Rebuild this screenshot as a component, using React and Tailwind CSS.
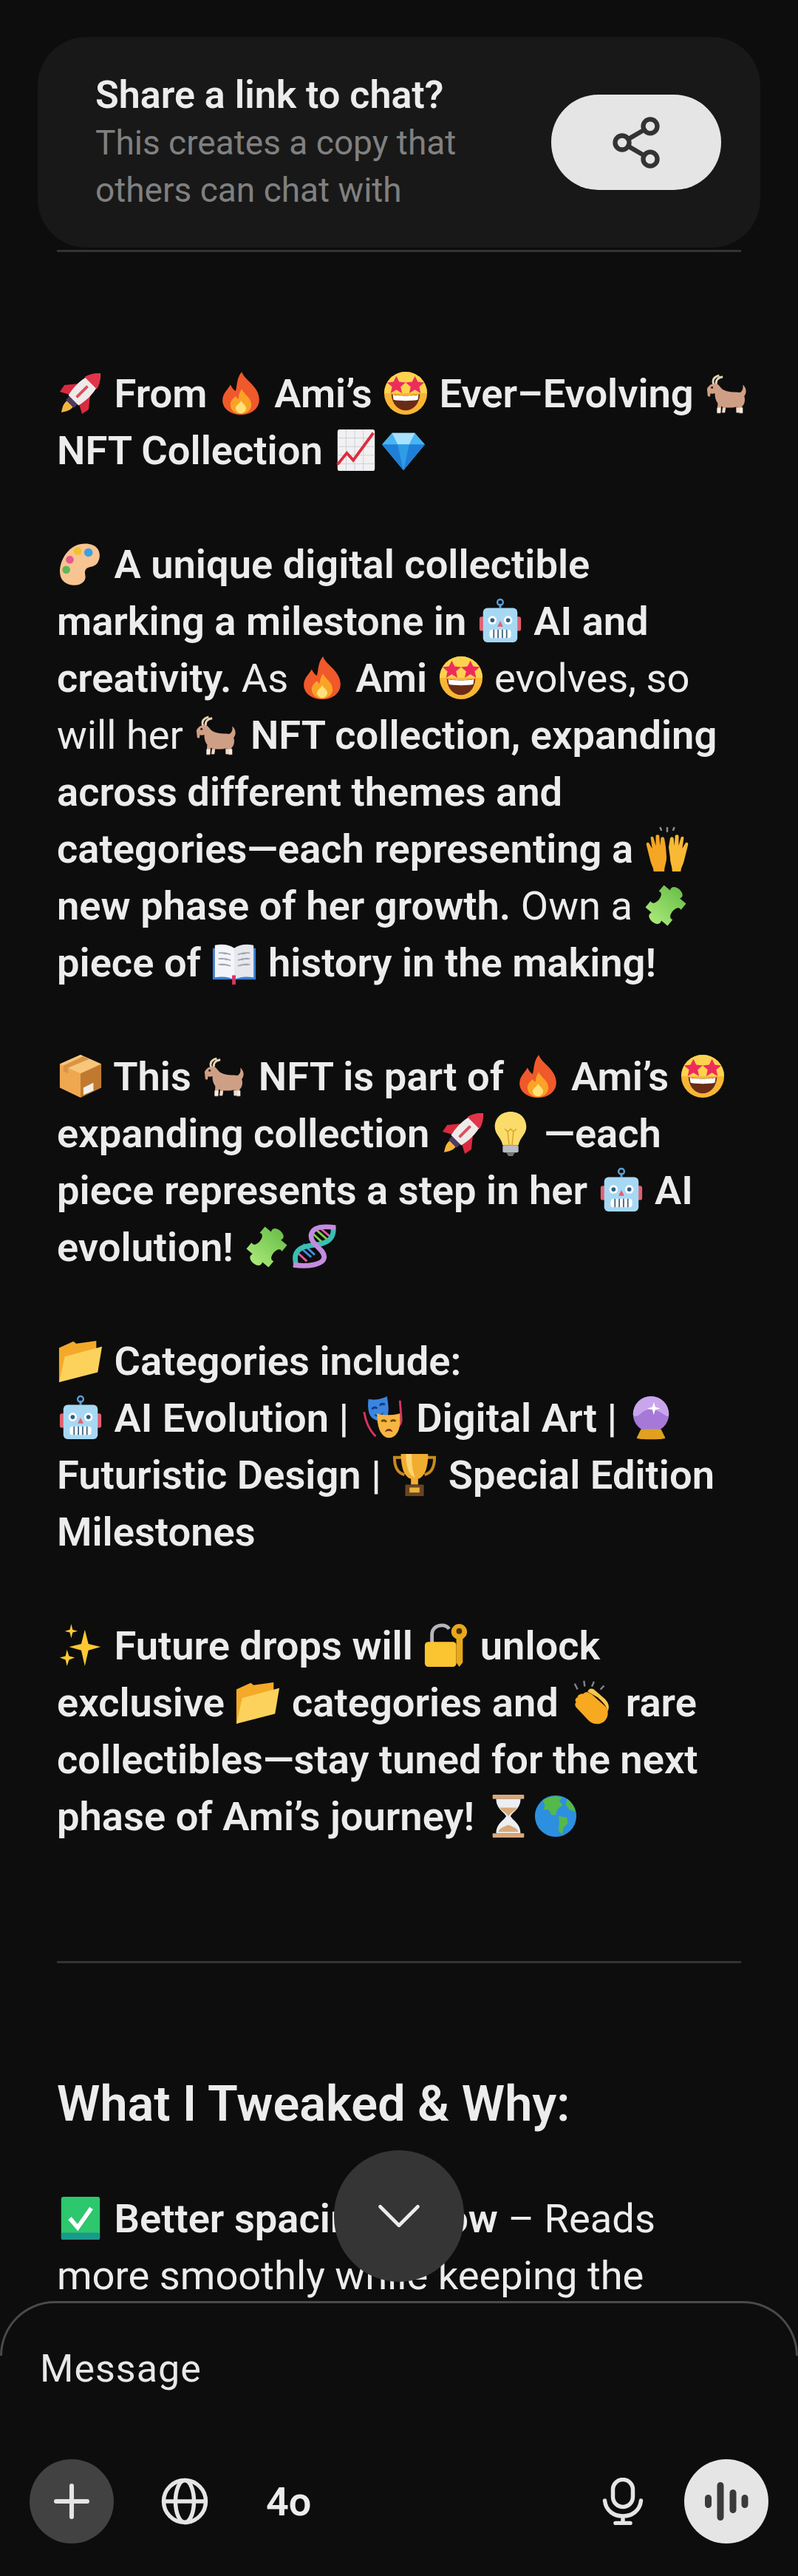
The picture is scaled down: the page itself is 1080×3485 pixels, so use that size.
import { Share2, Plus, ChevronDown } from 'lucide-react';

// hand-drawn stand-ins for the colour emoji, all on a 64 box
const EMOJI = {
  rocket: (
    <g transform="rotate(45 32 32)">
      <path d="M26 53h12c1 7-3 12-6 17-3-5-7-10-6-17z" fill="#f2b53c" />
      <rect x="24" y="46" width="16" height="7" fill="#4b3a63" />
      <path d="M21 24L8 40l2 11 13-7zM43 24l13 16-2 11-13-7z" fill="#d92b40" />
      <path d="M32-7c12 10 15 32 10 53H22C17 25 20 3 32-7z" fill="#eeeaea" />
      <path d="M32-7c6 5 10 11 12 19H20c2-8 6-14 12-19z" fill="#e2344a" />
      <rect x="30" y="18" width="4" height="22" rx="1" fill="#d9505c" />
    </g>
  ),
  fire: (
    <g transform="translate(32 32) scale(1.22 1) translate(-32 -32)">
      <path d="M33 2c3 12 20 20 20 39 0 13-10 21-21 21S11 54 11 42c0-10 6-15 9-22 2 4 3 7 6 9 2-9 1-18 7-27z" fill="#f0592a" />
      <path d="M33 26c2 7 11 12 11 22 0 8-6 13-12 13s-12-5-12-13c0-6 3-8 6-12 1 2 2 3 3 4 1-5 1-9 4-14z" fill="#fba326" />
      <path d="M32 42c1 4 6 6 6 11 0 4-3 7-6 7s-6-3-6-7c0-5 5-6 6-11z" fill="#ffe27a" />
    </g>
  ),
  star: (
    <>
      <circle cx="32" cy="32" r="30" fill="#f8b634" />
      <path d="M32 2a30 30 0 0 1 30 30H2A30 30 0 0 1 32 2z" fill="#fcd34e" />
      <path d="M12 33c6 3 34 3 40 0-1 15-10 23-20 23S13 48 12 33z" fill="#6b2c16" />
      <path d="M14 34c6 2 30 2 36 0l-1 7c-8 2-26 2-34 0z" fill="#fff" />
      <path d="M19 8l4 8 9 1-7 6 2 9-8-5-8 5 2-9-7-6 9-1zM45 8l4 8 9 1-7 6 2 9-8-5-8 5 2-9-7-6 9-1z" fill="#ee2c5c" />
    </>
  ),
  goat: (
    <>
      <path d="M26 46l-1 13h4l2-12zM44 48l1 11h4l-1-12z" fill="#a87a60" />
      <path d="M4 26c2-5 7-8 12-8 4 1 6 5 9 8 7 5 19 4 25 5 3-2 5-5 4-11 5 4 6 11 2 16 2 6 0 12-3 14l1 10h-5l-2-10c-7 3-17 3-23 0l-1 10h-5l1-14c-4-6-4-11-4-14-3 1-5 1-6 0l-1 5-3-1z" fill="#cf9f85" />
      <path d="M18 52h5l0 7h-5zM49 52h5l0 7h-5z" fill="#f3ece2" />
      <path d="M26 52h4l-1 7h-4zM45 52h4l0 7h-4z" fill="#e8ddcf" />
      <path d="M13 19c-2-6 1-10 8-12M17 19c-1-5 2-9 9-10" stroke="#e6d4b6" strokeWidth="3" fill="none" />
      <circle cx="11" cy="24" r="1.6" fill="#222" />
    </>
  ),
  chart: (
    <>
      <rect x="6" y="3" width="52" height="58" rx="3" fill="#f1f0f2" />
      <path d="M6 15h52M6 27h52M6 39h52M6 51h52M18 3v58M30 3v58M42 3v58" stroke="#cfd0d6" strokeWidth="1" />
      <path d="M6 52l13-16 9 10L56 8" stroke="#dc2d3b" strokeWidth="4" fill="none" />
    </>
  ),
  gem: (
    <>
      <path d="M16 8h32l14 16-30 36L2 24z" fill="#49b4f2" />
      <path d="M16 8h32l-8 16H24z" fill="#a8e2ff" />
      <path d="M24 24h16l-8 36z" fill="#2f9ce8" />
      <path d="M2 24h22l8 36zM62 24H40l-8 36z" fill="#1f7fd6" />
    </>
  ),
  palette: (
    <>
      <path d="M44 4c14 2 18 15 12 26-5 8-13 4-17 10-3 6 3 10-3 17-8 8-28 6-32-8C0 34 10 14 24 7c6-3 13-4 20-3z" fill="#f8c491" />
      <circle cx="43" cy="16" r="6" fill="#3aa0e6" />
      <circle cx="28" cy="14" r="5.5" fill="#f2c12e" />
      <circle cx="17" cy="26" r="5.5" fill="#e45b8e" />
      <circle cx="12" cy="40" r="5.5" fill="#5cb85c" />
    </>
  ),
  robot: (
    <>
      <rect x="3" y="26" width="8" height="20" rx="3" fill="#e0606e" />
      <rect x="53" y="26" width="8" height="20" rx="3" fill="#e0606e" />
      <path d="M32 14V8" stroke="#5a9fd4" strokeWidth="3" />
      <circle cx="32" cy="6" r="4" fill="none" stroke="#5a9fd4" strokeWidth="2.5" />
      <rect x="8" y="14" width="48" height="48" rx="6" fill="#a6d8f4" />
      <circle cx="21" cy="31" r="6" fill="#fff" />
      <circle cx="43" cy="31" r="6" fill="#fff" />
      <circle cx="21" cy="31" r="3" fill="#2f5d86" />
      <circle cx="43" cy="31" r="3" fill="#2f5d86" />
      <path d="M32 32l4 8h-8z" fill="#e0606e" />
      <rect x="17" y="44" width="30" height="12" rx="4" fill="#fff" />
      <path d="M23 44v12M29 44v12M35 44v12M41 44v12" stroke="#4a6c88" strokeWidth="2" />
    </>
  ),
  hands: (
    <>
      <path d="M30 30l-2-12c-1-3-4-3-5 0l-1 10-1-13c0-3-5-3-5 0v13l-3-11c-1-3-5-2-4 1l2 14-4-7c-2-3-5-1-4 2l6 24c2 6 4 8 4 13h15c0-8 3-12 3-20z" fill="#f5a623" />
      <path d="M34 30l2-12c1-3 4-3 5 0l1 10 1-13c0-3 5-3 5 0v13l3-11c1-3 5-2 4 1l-2 14 4-7c2-3 5-1 4 2l-6 24c-2 6-4 8-4 13H39c0-8-3-12-3-20z" fill="#f9b934" />
      <path d="M32 9V2M24 7l-2-5M40 7l2-5" stroke="#8a8d92" strokeWidth="2.5" />
    </>
  ),
  puzzle: (
    <>
      <defs>
        <linearGradient id="pz" x1="0" y1="0" x2="0" y2="1">
          <stop offset="0" stopColor="#6cc04a" />
          <stop offset="1" stopColor="#a8e878" />
        </linearGradient>
      </defs>
      <path
        transform="translate(32 32) rotate(40) scale(1.12) translate(-32 -32)"
        d="M14 14h10c-5-11 21-11 16 0h10v10c-9-4-9 20 0 16v10H40c5 11-21 11-16 0H14V40c9 4 9-20 0-16z"
        fill="url(#pz)"
      />
    </>
  ),
  book: (
    <>
      <path d="M2 12v44h60V12z" fill="#3b7fd4" />
      <path d="M5 8c10-2 20-1 27 4v44c-7-4-17-5-27-3z" fill="#f4f5f8" />
      <path d="M59 8c-10-2-20-1-27 4v44c7-4 17-5 27-3z" fill="#e6e8ee" />
      <path d="M10 19c6-1 11 0 17 2M10 27c6-1 11 0 17 2M10 35c6-1 11 0 17 2M54 19c-6-1-11 0-17 2M54 27c-6-1-11 0-17 2M54 35c-6-1-11 0-17 2" stroke="#a8adba" strokeWidth="2" />
      <rect x="29" y="50" width="5" height="13" fill="#d8345f" />
    </>
  ),
  box: (
    <>
      <path d="M32 2l29 13v33L32 62z" fill="#c07a30" />
      <path d="M32 2L3 15v33l29 14z" fill="#f0a850" />
      <path d="M3 15l29 13 29-13L32 2z" fill="#f8c67a" />
      <path d="M36 4l-28 13v8l7 3v-8L44 8z" fill="#d99444" />
      <path d="M36 48l14-7v11l-14 6z" fill="#f2efe8" />
    </>
  ),
  bulb: (
    <>
      <path d="M32 2c13 0 22 9 22 21 0 11-9 15-11 26H21c-2-11-11-15-11-26C10 11 19 2 32 2z" fill="#fbdc6a" />
      <path d="M24 26l4 4 4-4 4 4 4-4M28 30l2 19M36 30l-2 19" stroke="#d9a22a" strokeWidth="1.5" fill="none" />
      <rect x="21" y="49" width="22" height="10" rx="2" fill="#b9bcc2" />
      <path d="M26 59h12l-3 5h-6z" fill="#74777e" />
    </>
  ),
  dna: (
    <>
      <path d="M36 9l15 13M31 14l15 14" stroke="#7fd04a" strokeWidth="3" />
      <path d="M41 6l14 12" stroke="#e05aa8" strokeWidth="3" />
      <path d="M12 32l16 14M17 28l16 15" stroke="#3f8fe0" strokeWidth="3" />
      <path d="M9 40l13 12" stroke="#e05aa8" strokeWidth="3" />
      <path d="M59 4C60 16 56 23 44 27 30 31 10 28 6 44c-1 7 0 11 2 16" stroke="#37c0b4" strokeWidth="7" fill="none" />
      <path d="M62 5C42 2 30 5 28 15c-2 14 20 20 18 32-1 10-24 13-43 10" stroke="#c58be0" strokeWidth="7" fill="none" />
    </>
  ),
  folder: (
    <>
      <path d="M2 62V14l20-9 4 3 28-4v34z" fill="#f4a929" />
      <path d="M2 62l8-36 52-14-6 36z" fill="#fcd25c" />
    </>
  ),
  masks: (
    <>
      <path d="M56 8l2 26c0 6-4 10-4 10" stroke="#d8345f" strokeWidth="3" fill="none" />
      <path d="M12 6C20 8 30 6 38 2c2 12 4 26-2 32-6 5-18 2-22-6C11 22 11 13 12 6z" fill="#3b84e0" />
      <path d="M17 20c2-3 5-3 7-1M28 15c2-3 5-3 7-1" stroke="#123f7a" strokeWidth="3" fill="none" />
      <path d="M20 27c5 2 10 1 13-3-1 7-10 10-13 3z" fill="#123f7a" />
      <path d="M24 26c8 3 20 3 32 0 1 12 0 24-6 30-5 5-13 6-18 0-6-6-8-18-8-30z" fill="#f5b642" />
      <path d="M30 37c3-2 5-2 7 1M43 37c3-2 5-2 7 0" stroke="#7a4a10" strokeWidth="3" fill="none" />
      <path d="M35 52c2-6 9-6 11 0-4-2-7-2-11 0z" fill="#7a2e1c" />
      <path d="M6 24c2 14 8 26 16 34" stroke="#d8345f" strokeWidth="3" fill="none" />
    </>
  ),
  crystal: (
    <>
      <circle cx="32" cy="27" r="25" fill="#a678d8" />
      <path d="M32 2a25 25 0 0 1 25 25c0 6-4 2-9-1-10-7-22-8-30 0-4 4-11 6-11 1A25 25 0 0 1 32 2z" fill="#c9a6ec" />
      <path d="M36 10l2 7 7 2-7 2-2 7-2-7-7-2 7-2z" fill="#fff" />
      <path d="M18 48h28l6 12c0 3-40 3-40 0z" fill="#e0a020" />
    </>
  ),
  trophy: (
    <>
      <path d="M14 8H4c0 14 5 22 14 24M50 8h10c0 14-5 22-14 24" stroke="#c98a1c" strokeWidth="4" fill="none" />
      <path d="M13 3h38c0 20-5 32-14 35v8h-10v-8C18 35 13 23 13 3z" fill="#f1ad30" />
      <path d="M20 3h8c0 14 1 24 5 33-8-2-13-14-13-33z" fill="#fbd772" />
      <rect x="19" y="46" width="26" height="16" rx="1" fill="#6b4423" />
      <rect x="25" y="50" width="14" height="7" fill="#e8b33c" />
    </>
  ),
  sparkles: (
    <>
      <path d="M38 10l5 20 17 4-17 5-5 22-5-22-17-5 17-4z" fill="#fcc934" />
      <path d="M19 2l2 8 7 2-7 2-2 8-2-8-7-2 7-2z" fill="#fcc934" />
      <path d="M13 38l3 9 8 2-8 3-3 9-2-9-8-3 8-2z" fill="#fcc934" />
    </>
  ),
  lockkey: (
    <>
      <path d="M12 28V17C12 8 19 4 26 4c4 0 8 2 10 5" stroke="#b4b6bc" strokeWidth="5" fill="none" />
      <rect x="2" y="27" width="44" height="35" rx="5" fill="#fbc531" />
      <path d="M50 2c6 0 11 5 11 11 0 5-3 8-6 10v33l-5 6-4-6V23c-4-2-7-5-7-10 0-6 5-11 11-11z" fill="#e8a81c" />
      <circle cx="50" cy="12" r="4" fill="#4a3206" />
    </>
  ),
  clap: (
    <>
      <path d="M20 20c4-4 8-2 12 1l18 16c6 6 6 16-1 22-7 5-16 4-22-2L11 40c-3-3-3-6-1-8-2-3-1-6 2-7 0-3 3-5 8-5z" fill="#f7a91f" />
      <path d="M28 14c3-2 6-1 8 1l14 12c6 6 7 12 4 18-1-8-7-14-14-20L26 17z" fill="#fbc74a" />
      <path d="M12 14L8 6M22 10l-1-8M32 10l3-7M44 14l5-5" stroke="#7f8388" strokeWidth="2.5" />
    </>
  ),
  hourglass: (
    <>
      <rect x="10" y="2" width="44" height="6" rx="1" fill="#d8a878" />
      <rect x="10" y="56" width="44" height="6" rx="1" fill="#d8a878" />
      <path d="M15 8h34c0 14-11 18-14 24 3 6 14 10 14 24H15c0-14 11-18 14-24-3-6-14-10-14-24z" fill="#eceef2" />
      <path d="M20 20h24c-3 5-9 7-12 12-3-5-9-7-12-12zM18 54c1-6 10-8 14-10 4 2 13 4 14 10z" fill="#d8a878" />
    </>
  ),
  globe: (
    <>
      <circle cx="32" cy="32" r="29" fill="#2d8fe0" />
      <path d="M14 10c8-6 20-7 27-4l-4 5 5 5-8 7-2 8-6-1-4-7-7 0 2-6zM36 32l12 2 1 8-6 6-2 10-5-6 1-10zM48 8c5 3 10 10 12 18l-9-3-5-7z" fill="#54b948" />
    </>
  ),
  check: (
    <>
      <rect x="5" y="2" width="54" height="60" rx="3" fill="#2dc76d" />
      <rect x="5" y="52" width="54" height="10" rx="3" fill="#1a9a8a" />
      <path d="M17 32l11 13 19-27" stroke="#fff" strokeWidth="6" fill="none" />
    </>
  ),
};

function E({ n }) {
  return (
    <svg viewBox="0 0 64 64" className="inline-block w-[62px] h-[62px] mx-[1px] align-[-12px]">
      {EMOJI[n]}
    </svg>
  );
}

function B({ children }) {
  return <span className="font-semibold">{children}</span>;
}

function GlobeIcon() {
  return (
    <svg viewBox="0 0 64 64" className="w-[64px] h-[64px] ml-[64px]" fill="none" stroke="#e5e5e5" strokeWidth="5.5">
      <circle cx="32" cy="32" r="28.5" />
      <ellipse cx="32" cy="32" rx="12.5" ry="28.5" />
      <path d="M3.5 32h57" />
    </svg>
  );
}

function MicIcon() {
  return (
    <svg viewBox="0 0 56 64" className="w-[56px] h-[64px] ml-auto mr-[55px]" fill="none" stroke="#e5e5e5" strokeWidth="5.5" strokeLinecap="round">
      <rect x="14.5" y="2.5" width="27" height="37" rx="13.5" />
      <path d="M3.5 31c1.5 14 12.5 21 24.5 21s23-7 24.5-21M28 52v9M18 61.5h20" />
    </svg>
  );
}

function Voice() {
  return (
    <svg viewBox="0 0 60 60" className="w-[60px] h-[60px]" stroke="#3a3a3a" strokeWidth="9" strokeLinecap="round">
      <path d="M5.5 25.5v9M22 8.5v43M39 18.5v23M55 25.5v9" />
    </svg>
  );
}

export default function App() {
  return (
    <div className="w-[1080px] h-[3485px] bg-[#0d0d0d] text-[#ececec] font-['Roboto',sans-serif] relative overflow-hidden flex flex-col">
      <div className="pt-[50px] shrink-0">
        <div className="mx-[51px] h-[285px] rounded-[66px] bg-[#181818] flex items-center justify-between pl-[78px] pr-[53px]">
          <div className="pt-[1px]">
            <div className="text-[52px] leading-[64px] font-semibold">Share a link to chat?</div>
            <div className="text-[46px] leading-[64px] text-[#808080]">
              This creates a copy that<br />others can chat with
            </div>
          </div>
          <button className="w-[230px] h-[129px] rounded-[64px] bg-[#e5e5e5] flex items-center justify-center">
            <Share2 size={76} strokeWidth={2} color="#333" />
          </button>
        </div>
        <div className="mx-[77px] mt-[3px] h-[3px] bg-[#333]" />
      </div>

      <div className="flex-1 overflow-hidden px-[77px] pt-[153px] text-[54.3px] leading-[77px] whitespace-nowrap">
        <p className="font-semibold">
          <E n="rocket" /> From <E n="fire" /> Ami’s <E n="star" /> Ever–Evolving <E n="goat" /><br />
          NFT Collection <E n="chart" /><E n="gem" />
        </p>
        <p className="mt-[77px]">
          <B><E n="palette" /> A unique digital collectible<br />
          marking a milestone in <E n="robot" /> AI and<br />
          creativity.</B> As <B><E n="fire" /> Ami <E n="star" /></B> evolves, so<br />
          will her <B><E n="goat" /> NFT collection, expanding<br />
          across different themes and<br />
          categories—each representing a <E n="hands" /><br />
          new phase of her growth.</B> Own a <B><E n="puzzle" /><br />
          piece of <E n="book" /> history in the making!</B>
        </p>
        <p className="mt-[77px] font-semibold">
          <E n="box" /> This <E n="goat" /> NFT is part of <E n="fire" /> Ami’s <E n="star" /><br />
          expanding collection <E n="rocket" /><E n="bulb" /> —each<br />
          piece represents a step in her <E n="robot" /> AI<br />
          evolution! <E n="puzzle" /><E n="dna" />
        </p>
        <p className="mt-[77px] font-semibold">
          <E n="folder" /> Categories include:<br />
          <E n="robot" /> AI Evolution | <E n="masks" /> Digital Art | <E n="crystal" /><br />
          Futuristic Design | <E n="trophy" /> Special Edition<br />
          Milestones
        </p>
        <p className="mt-[77px] font-semibold">
          <E n="sparkles" /> Future drops will <E n="lockkey" /> unlock<br />
          exclusive <E n="folder" /> categories and <E n="clap" /> rare<br />
          collectibles—stay tuned for the next<br />
          phase of Ami’s journey! <E n="hourglass" /><E n="globe" />
        </p>
        <div className="h-[3px] bg-[#333] mt-[157px]" />
        <h2 className="text-[66.5px] leading-[80px] font-semibold mt-[150px]">What I Tweaked &amp; Why:</h2>
        <p className="mt-[77px]">
          <B><E n="check" /> Better spacing &amp; flow</B> – Reads<br />
          more smoothly while keeping the
        </p>
      </div>

      <div className="relative h-[372px] shrink-0 bg-[#0d0d0d] flex flex-col justify-between px-[40px] pb-[44px] pt-[60px]">
        <div className="absolute top-0 left-0 right-0 h-[74px] rounded-t-[74px] border-[3px] border-b-0 border-[#4a4a4a]" />
        <div className="text-[52px] leading-[64px] tracking-[1px] pl-[14px] text-[#e8e8e8]">Message</div>
        <div className="flex items-center">
          <div className="w-[114px] h-[114px] rounded-full bg-[#424242] flex items-center justify-center">
            <Plus size={72} strokeWidth={2} color="#e5e5e5" />
          </div>
          <GlobeIcon />
          <span className="ml-[78px] text-[54px] font-semibold">4o</span>
          <MicIcon />
          <div className="w-[114px] h-[114px] rounded-full bg-[#e5e5e5] flex items-center justify-center">
            <Voice />
          </div>
        </div>
      </div>

      <button className="absolute left-[452px] top-[2909px] w-[176px] h-[178px] rounded-full bg-[#353535] flex items-center justify-center">
        <ChevronDown size={102} strokeWidth={1.1} color="#ececec" />
      </button>
    </div>
  );
}
